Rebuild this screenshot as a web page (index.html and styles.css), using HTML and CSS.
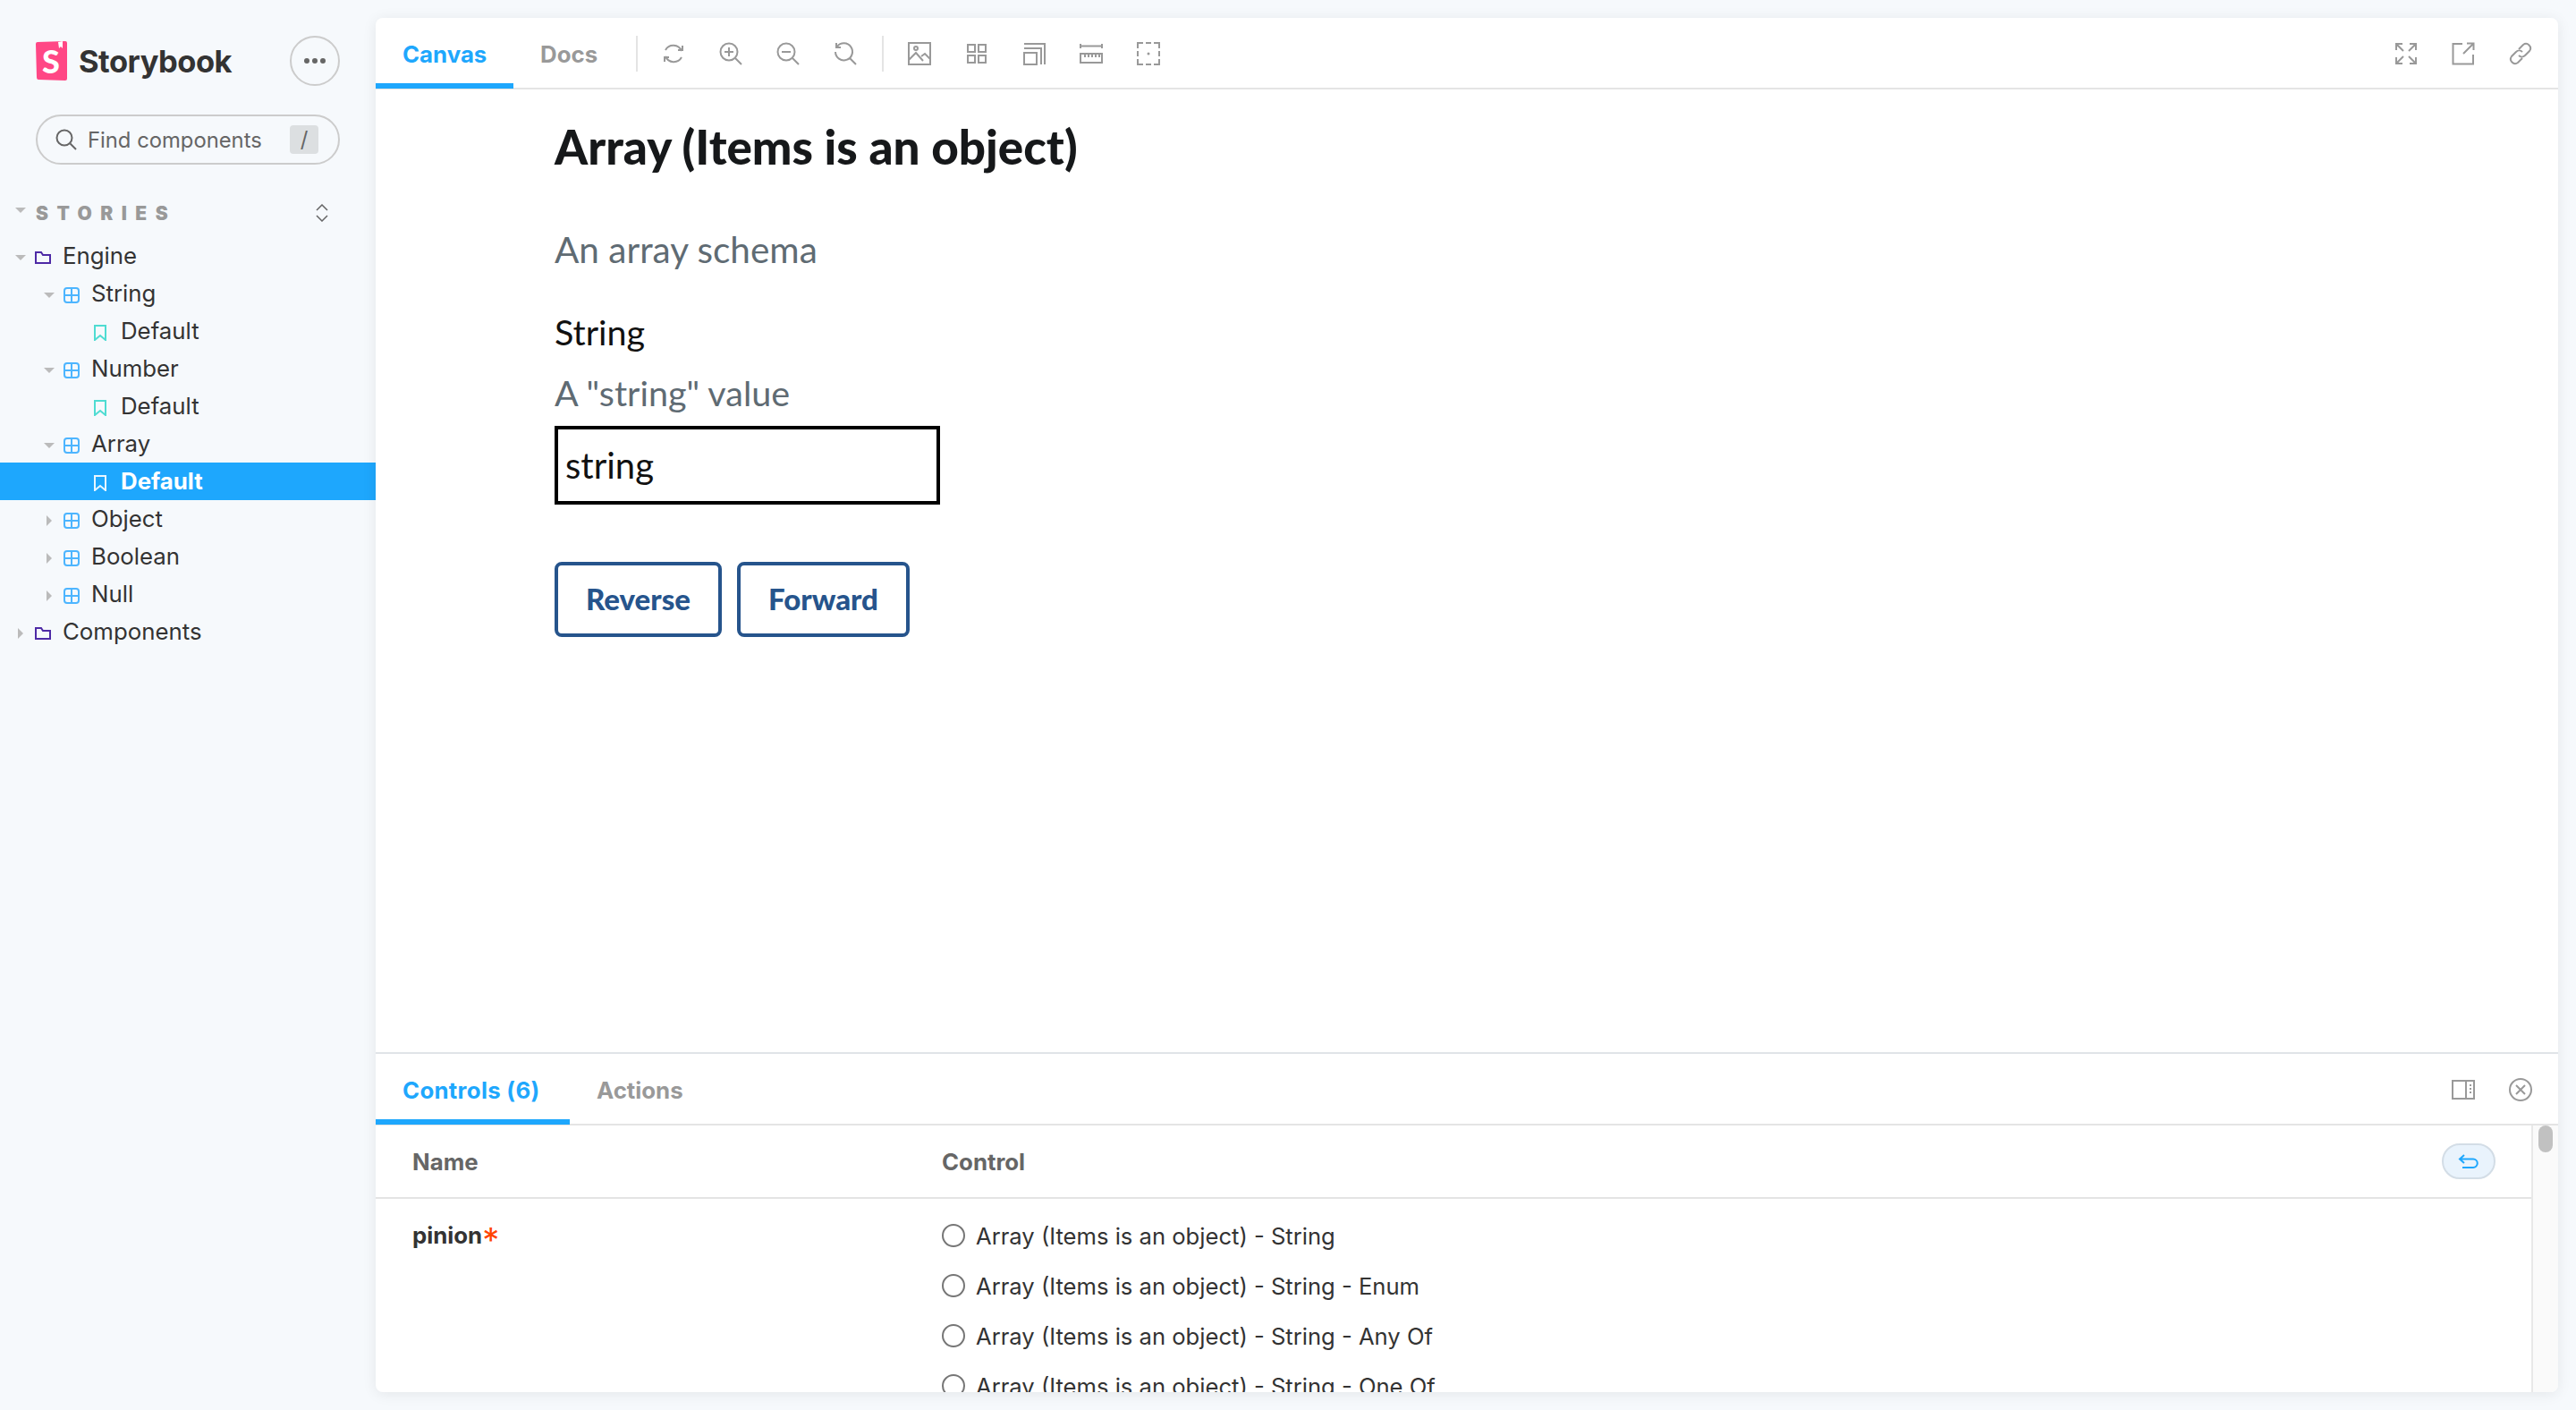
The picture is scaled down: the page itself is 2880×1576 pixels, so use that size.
FILE: index.html
```html
<!DOCTYPE html>
<html lang="en">
<head>
    <meta charset="UTF-8">
    <title>Storybook</title>
    <link rel="stylesheet" href="styles.css">
</head>
<body>
<div class="app">
    <aside class="sidebar">
        <div class="brand">
            <svg class="logo" viewBox="0 0 35 44">
                <path d="M1 40 0 3Q0 1 2 1L33 0Q35 0 35 2V42Q35 44 33 44L3 43Q1 43 1 40Z" fill="#ff4785"/>
                <path d="M25 1 26 8 28 6 30 8V0Z" fill="#fff"/>
                <text x="17" y="36" class="logo-s">S</text>
            </svg>
            <span class="brand-name">Storybook</span>
            <button class="menu-btn"><i></i><i></i><i></i></button>
        </div>

        <div class="search">
            <svg class="search-icon" viewBox="0 0 24 24"><circle cx="10" cy="10" r="8.5"/><path d="M16.5 16.5 23 23"/></svg>
            <span class="search-text">Find components</span>
            <span class="kbd">/</span>
        </div>

        <div class="section-head">
            <span class="arrow down"></span>
            <span class="section-title">Stories</span>
            <svg class="expand-icon" viewBox="0 0 14 20"><path d="M1 7 7 1l6 6M1 13l6 6 6-6"/></svg>
        </div>

        <div class="tree">
            <div class="row lv0"><span class="arrow down"></span><svg class="ico folder" viewBox="0 0 18 14"><path d="M1 13V1h6l2 3h8v9Z"/></svg>Engine</div>
            <div class="row lv1"><span class="arrow down"></span><svg class="ico comp" viewBox="0 0 18 18"><rect x="1" y="1" width="16" height="16" rx="3"/><path d="M9 1v16M1 9h16"/></svg>String</div>
            <div class="row lv2"><svg class="ico story" viewBox="0 0 14 18"><path d="M1 1h12v16l-6-5-6 5Z"/></svg>Default</div>
            <div class="row lv1"><span class="arrow down"></span><svg class="ico comp" viewBox="0 0 18 18"><rect x="1" y="1" width="16" height="16" rx="3"/><path d="M9 1v16M1 9h16"/></svg>Number</div>
            <div class="row lv2"><svg class="ico story" viewBox="0 0 14 18"><path d="M1 1h12v16l-6-5-6 5Z"/></svg>Default</div>
            <div class="row lv1"><span class="arrow down"></span><svg class="ico comp" viewBox="0 0 18 18"><rect x="1" y="1" width="16" height="16" rx="3"/><path d="M9 1v16M1 9h16"/></svg>Array</div>
            <div class="row lv2 selected"><svg class="ico story" viewBox="0 0 14 18"><path d="M1 1h12v16l-6-5-6 5Z"/></svg>Default</div>
            <div class="row lv1"><span class="arrow right"></span><svg class="ico comp" viewBox="0 0 18 18"><rect x="1" y="1" width="16" height="16" rx="3"/><path d="M9 1v16M1 9h16"/></svg>Object</div>
            <div class="row lv1"><span class="arrow right"></span><svg class="ico comp" viewBox="0 0 18 18"><rect x="1" y="1" width="16" height="16" rx="3"/><path d="M9 1v16M1 9h16"/></svg>Boolean</div>
            <div class="row lv1"><span class="arrow right"></span><svg class="ico comp" viewBox="0 0 18 18"><rect x="1" y="1" width="16" height="16" rx="3"/><path d="M9 1v16M1 9h16"/></svg>Null</div>
            <div class="row lv0"><span class="arrow right"></span><svg class="ico folder" viewBox="0 0 18 14"><path d="M1 13V1h6l2 3h8v9Z"/></svg>Components</div>
        </div>
    </aside>

    <main class="main">
        <div class="toolbar">
            <a class="tab active canvas-tab">Canvas</a>
            <a class="tab">Docs</a>
            <span class="sep"></span>
            <div class="tools">
                <svg class="tool" viewBox="0 0 26 26"><path d="M4 9A10 10 0 0 1 22 10M22 17A10 10 0 0 1 4 16"/><path d="M18 9h5V4M8 17H3v5"/></svg>
                <svg class="tool" viewBox="0 0 26 26"><circle cx="11" cy="11" r="9.5"/><path d="M18 18l7 7M11 6v10M6 11h10"/></svg>
                <svg class="tool" viewBox="0 0 26 26"><circle cx="11" cy="11" r="9.5"/><path d="M18 18l7 7M6 11h10"/></svg>
                <svg class="tool" viewBox="0 0 26 26"><path d="M4 5A9.5 9.5 0 1 1 2 11M18 18l7 7"/><path d="M3 1v5h5"/></svg>
            </div>
            <span class="sep"></span>
            <div class="tools">
                <svg class="tool" viewBox="0 0 26 26"><path d="M1 1h24v24H1ZM1 20l8-8 8 9M15 16l4-3 6 6"/><circle cx="9" cy="7" r="2"/></svg>
                <svg class="tool" viewBox="0 0 26 26"><path d="M3 3h8v8H3ZM15 3h8v8h-8ZM3 15h8v8H3ZM15 15h8v8h-8Z"/></svg>
                <svg class="tool" viewBox="0 0 26 26"><path d="M2 12h14v13H2ZM2 7h19v18M2 2h23v23"/></svg>
                <svg class="tool" viewBox="0 0 26 26"><path d="M1 2v5M25 2v5M1 4.500h24M1 13h24v10H1ZM6 13v4M10 13v4M14 13v4M18 13v4M22 13v4"/></svg>
                <svg class="tool" viewBox="0 0 26 26"><path d="M1 7V1h6M10 1h6M19 1h6v6M25 10v6M25 19v6h-6M16 25h-6M7 25H1v-6M1 16v-6"/><circle class="dot" cx="13" cy="13" r="1.500"/></svg>
            </div>
            <div class="tools tools-end">
                <svg class="tool" viewBox="0 0 26 26"><path d="M2 9V2h7M2 2l8 8M17 2h7v7M24 2l-8 8M2 17v7h7M2 24l8-8M24 17v7h-7M24 24l-8-8"/></svg>
                <svg class="tool" viewBox="0 0 26 26"><path d="M12 2H1.500v22.500H24V14M17 1.500h7.500V9M24 2 13 13"/></svg>
                <svg class="tool" viewBox="0 0 26 26"><path d="M11 8l5-5a5 5 0 0 1 7 7l-5 5a5 5 0 0 1-7 0M15 18l-5 5a5 5 0 0 1-7-7l5-5a5 5 0 0 1 7 0"/></svg>
            </div>
        </div>

        <section class="preview">
            <h1>Array (Items is an object)</h1>
            <p class="description">An array schema</p>
            <div class="field-title">String</div>
            <p class="field-desc">A "string" value</p>
            <input class="field-input" type="text" value="string">
            <div class="actions">
                <button class="btn btn-reverse">Reverse</button>
                <button class="btn">Forward</button>
            </div>
        </section>

        <section class="panel">
            <div class="panel-tabs">
                <a class="tab active controls-tab">Controls (6)</a>
                <a class="tab">Actions</a>
                <div class="tools tools-end">
                    <svg class="tool" viewBox="0 0 26 26"><path d="M1 3h24v20H1ZM16 3v20M20 8h2M20 12h2M20 16h2"/></svg>
                    <svg class="tool" viewBox="0 0 26 26"><circle cx="13" cy="13" r="12"/><path d="M8 8l10 10M18 8 8 18"/></svg>
                </div>
            </div>
            <div class="panel-body">
                <div class="table">
                    <div class="thead">
                        <span class="col-name">Name</span>
                        <span class="col-control">Control</span>
                        <button class="undo">
                            <svg viewBox="0 0 24 16"><path d="M7 1 2 5.500 7 10M2 5.500h15a4.500 4.500 0 0 1 0 9.500H5"/></svg>
                        </button>
                    </div>
                    <div class="tbody">
                        <span class="col-name prop">pinion<span class="req">*</span></span>
                        <div class="col-control radios">
                            <label class="radio"><input type="radio" name="pinion">Array (Items is an object) - String</label>
                            <label class="radio"><input type="radio" name="pinion">Array (Items is an object) - String - Enum</label>
                            <label class="radio"><input type="radio" name="pinion">Array (Items is an object) - String - Any Of</label>
                            <label class="radio"><input type="radio" name="pinion">Array (Items is an object) - String - One Of</label>
                        </div>
                    </div>
                </div>
                <div class="scrollbar"><div class="thumb"></div></div>
            </div>
        </section>
    </main>
</div>
</body>
</html>
```

FILE: styles.css
```css
* {
    box-sizing: border-box;
}

body {
    margin: 0;
    font-family: "Inter", "Noto Sans", sans-serif;
    font-size: 25.8px;
    color: #333;
    background-color: #f6f9fc;
}

.app {
    display: flex;
    height: 1576px;
    overflow: hidden;
}

/* Sidebar */
.sidebar {
    width: 420px;
    flex-shrink: 0;
    padding-top: 40px;
}

.brand {
    display: flex;
    align-items: center;
    height: 56px;
    padding: 0 40px;
}

.logo {
    width: 35px;
    height: 44px;
}

.logo-s {
    font-family: "Lato", sans-serif;
    font-weight: 900;
    font-size: 36px;
    fill: #fff;
    text-anchor: middle;
}

.brand-name {
    margin-left: 13px;
    font-size: 34.5px;
    font-weight: 700;
    letter-spacing: -0.5px;
}

.menu-btn {
    margin-left: auto;
    width: 56px;
    height: 56px;
    padding: 0;
    border: 2px solid #ccc;
    border-radius: 50%;
    background: transparent;
    display: flex;
    align-items: center;
    justify-content: center;
    gap: 3px;
}

.menu-btn i {
    width: 6px;
    height: 6px;
    border-radius: 50%;
    background-color: #666;
}

.search {
    display: flex;
    align-items: center;
    height: 56px;
    margin: 32px 40px 0;
    padding: 0 22px 0 20px;
    border: 2px solid #ccc;
    border-radius: 28px;
    color: #666;
}

.search-icon {
    width: 24px;
    height: 24px;
    fill: none;
    stroke: #666;
    stroke-width: 2;
}

.search-text {
    margin-left: 12px;
    font-size: 23.800px;
}

.kbd {
    margin-left: auto;
    width: 32px;
    height: 32px;
    border-radius: 4px;
    background-color: #dcdfe1;
    text-align: center;
    line-height: 32px;
    font-size: 24px;
}

.section-head {
    display: flex;
    align-items: center;
    height: 28px;
    margin-top: 40px;
    padding-left: 17px;
}

.section-title {
    margin-left: 11px;
    font-size: 21px;
    font-weight: 900;
    letter-spacing: 0.45em;
    text-transform: uppercase;
    color: #999;
}

.expand-icon {
    width: 14px;
    height: 20px;
    margin-left: auto;
    margin-right: 53px;
    fill: none;
    stroke: #666;
    stroke-width: 1.5;
}

.tree {
    margin-top: 13px;
}

.row {
    display: flex;
    align-items: center;
    height: 42px;
    line-height: 1;
}

.lv0 {
    padding-left: 17px;
}

.lv1 {
    padding-left: 49px;
}

.lv2 {
    padding-left: 105px;
}

.arrow {
    display: inline-block;
    width: 12px;
    height: 12px;
    position: relative;
    flex-shrink: 0;
}

.arrow::before {
    content: "";
    position: absolute;
    left: 0;
    top: 5px;
    border-style: solid;
    border-color: transparent;
}

.section-head .arrow::before {
    top: 0;
}

.arrow.down::before {
    border-width: 6px 6px 0;
    border-top-color: #bbb;
}

.arrow.right::before {
    left: 3px;
    top: 2px;
    border-width: 6px 0 6px 6px;
    border-left-color: #bbb;
}

.ico {
    flex-shrink: 0;
    fill: none;
    stroke-width: 2;
}

.folder {
    width: 18px;
    height: 14px;
    margin: 4px 13px 0 10px;
    stroke: #4e2aa6;
}

.comp {
    width: 18px;
    height: 18px;
    margin: 4px 13px 0 10px;
    stroke: #4db5ff;
}

.story {
    width: 14px;
    height: 18px;
    margin: 4px 16px 0 0;
    stroke: #4fdcd2;
}

.selected {
    background-color: #1ea7fd;
    color: #fff;
    font-weight: 700;
}

.selected .story {
    stroke: #e8f6ff;
}

/* Main card */
.main {
    flex: 1;
    display: flex;
    flex-direction: column;
    margin: 20px 20px 20px 0;
    border-radius: 8px;
    background-color: #fff;
    box-shadow: 0 2px 16px rgba(0, 0, 0, 0.08);
    overflow: hidden;
    min-width: 0;
}

.toolbar,
.panel-tabs {
    display: flex;
    align-items: center;
    flex-shrink: 0;
    border-bottom: 2px solid #e4e4e4;
}

.toolbar {
    height: 80px;
}

.tab {
    height: 100%;
    display: flex;
    align-items: center;
    padding: 6px 30px 0;
    font-weight: 700;
    color: #999;
    margin-bottom: -2px;
    border-bottom: 6px solid transparent;
}

.tab.active {
    color: #1ea7fd;
    border-bottom-color: #1ea7fd;
}

.canvas-tab {
    width: 154px;
}

.controls-tab {
    width: 217px;
    letter-spacing: 0.3px;
}

.sep {
    width: 2px;
    height: 40px;
    margin: 2px 27px 0 13px;
    background-color: #e4e4e4;
}

.tools {
    display: flex;
    align-items: center;
    gap: 38px;
    margin-top: 2px;
    margin-right: 15px;
}

.tools-end {
    margin-left: auto;
    margin-right: 29px;
}

.tool {
    width: 26px;
    height: 26px;
    fill: none;
    stroke: #999;
    stroke-width: 2;
}

.tool .dot {
    fill: #999;
    stroke: none;
}

/* Story preview */
.preview {
    flex: 1;
    padding: 0 0 0 200px;
    font-family: "Lato", "Open Sans", sans-serif;
    min-height: 0;
}

h1 {
    margin: 32px 0 0;
    font-size: 53px;
    line-height: 64px;
    font-weight: 900;
    color: #16181a;
}

.description,
.field-desc {
    margin: 0;
    color: #5f6b73;
}

.description {
    margin-top: 58px;
    font-size: 40.500px;
    line-height: 50px;
}

.field-title {
    margin-top: 42px;
    font-size: 39.500px;
    line-height: 50px;
    color: #111;
}

.field-desc {
    margin-top: 18px;
    font-size: 39.500px;
    line-height: 50px;
}

.field-input {
    display: block;
    width: 431px;
    height: 88px;
    margin-top: 12px;
    padding: 0 8px;
    border: 4px solid #000;
    border-radius: 0;
    font-family: inherit;
    font-size: 40px;
    color: #111;
    outline: none;
}

.actions {
    display: flex;
    gap: 17px;
    margin-top: 64px;
}

.btn {
    height: 84px;
    padding: 0 31px 3px;
    border: 4px solid #26548c;
    border-radius: 8px;
    background-color: #fff;
    font-family: inherit;
    font-size: 33px;
    font-weight: 900;
    color: #26548c;
}

/* Addons panel */
.panel {
    height: 380px;
    flex-shrink: 0;
    display: flex;
    flex-direction: column;
    border-top: 2px solid #e0e4e8;
}

.panel-tabs {
    height: 80px;
}

.panel-body {
    flex: 1;
    display: flex;
    min-height: 0;
}

.table {
    flex: 1;
    min-width: 0;
    overflow: hidden;
}

.thead {
    display: flex;
    align-items: center;
    height: 82px;
    padding-left: 41px;
    border-bottom: 2px solid #e4e4e4;
    font-weight: 700;
    color: #666;
}

.col-name {
    width: 592px;
    flex-shrink: 0;
}

.undo {
    margin-left: auto;
    margin-right: 40px;
    width: 60px;
    height: 40px;
    padding: 0;
    border: 2px solid #d3dde6;
    border-radius: 20px;
    background-color: #e9f3fc;
    display: flex;
    align-items: center;
    justify-content: center;
}

.undo svg {
    width: 24px;
    height: 16px;
    fill: none;
    stroke: #1ea7fd;
    stroke-width: 2;
}

.tbody {
    display: flex;
    padding: 20px 0 0 41px;
}

.prop {
    font-weight: 700;
    line-height: 42px;
}

.req {
    color: #ff4400;
    font-size: 38px;
    font-weight: 400;
    line-height: 0;
    vertical-align: -10px;
}

.radio {
    display: flex;
    align-items: center;
    height: 56px;
    margin-top: -7px;
    margin-bottom: 7px;
    font-size: 25.600px;
}

.radio input {
    appearance: none;
    width: 26px;
    height: 26px;
    margin: 0 12px 0 0;
    border: 2px solid #767676;
    border-radius: 50%;
    background-color: #fff;
}

.scrollbar {
    width: 30px;
    flex-shrink: 0;
    padding-left: 6px;
    background-color: #fafafa;
    border-left: 2px solid #e8e8e8;
}

.thumb {
    width: 16px;
    height: 30px;
    border-radius: 8px;
    background-color: #c1c1c1;
}
```
